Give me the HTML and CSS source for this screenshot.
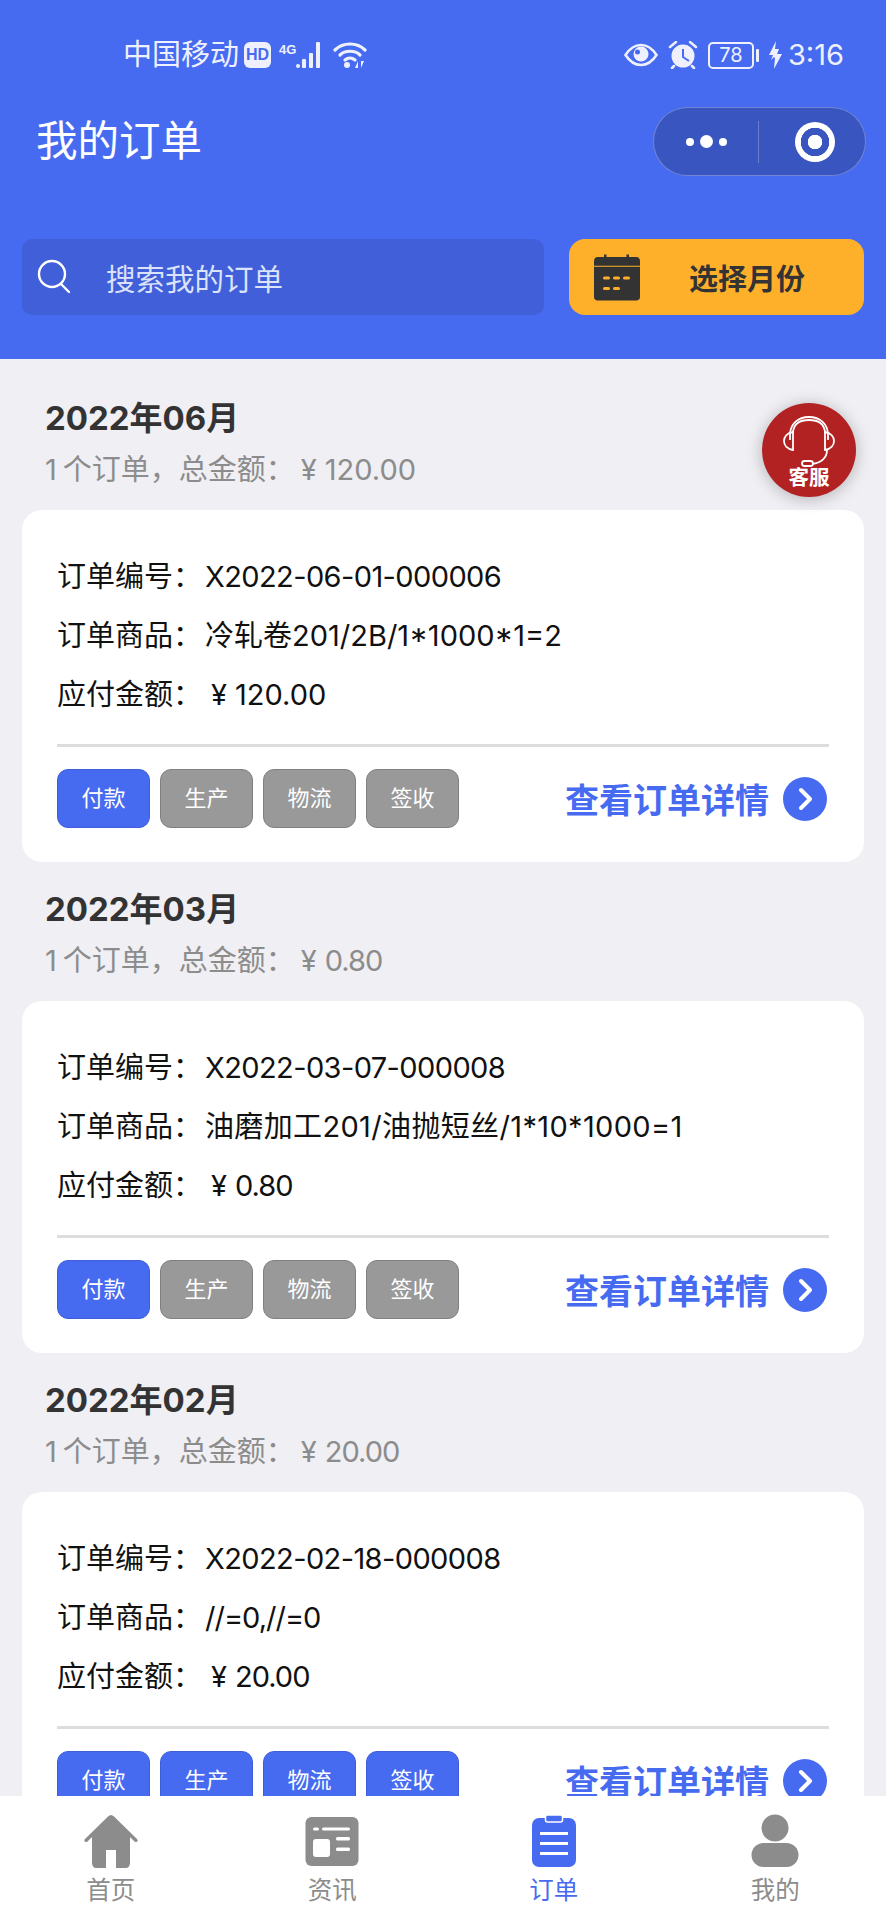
FILE: index.html
```html
<!DOCTYPE html>
<html lang="zh-CN">
<head>
<meta charset="utf-8">
<title>我的订单</title>
<link rel="stylesheet" href="styles.css">
</head>
<body>
<div class="app">
  <header class="header">
    <div class="status">
      <div class="status-left">
        <span class="carrier">中国移动</span>
        <span class="hd">HD</span>
        <span class="net">4G</span>
        <svg class="signal" width="28" height="28" viewBox="0 0 28 28"><g fill="#eef1fd"><rect x="0" y="23" width="4" height="4" rx="2"/><rect x="6" y="18" width="4" height="9" rx="1"/><rect x="13" y="12" width="4" height="15" rx="1"/><rect x="20" y="1" width="4" height="26" rx="1"/></g></svg>
        <svg class="wifi" width="34" height="28" viewBox="0 0 34 28"><g fill="none" stroke="#eef1fd" stroke-width="3.2" stroke-linecap="round"><path d="M2 9C10 1 24 1 32 9"/><path d="M7 14C12 9 22 9 27 14"/><path d="M12 19C15 16.500 19 16.500 22 19"/></g><circle cx="14" cy="24" r="3" fill="#eef1fd"/><path d="M25 27v-7l-3 7zM28 20v7l3-7z" fill="#eef1fd"/></svg>
      </div>
      <div class="status-right">
        <svg class="eye" width="34" height="24" viewBox="0 0 34 24"><path d="M1.500 12C6 5 11 2 17 2s11 3 15.500 10C28 19 23 22 17 22S6 19 1.500 12z" fill="none" stroke="#eef1fd" stroke-width="2.600"/><circle cx="17" cy="11" r="7.500" fill="#eef1fd"/><circle cx="13.500" cy="9" r="2.500" fill="#476bf0"/></svg>
        <svg class="alarm" width="30" height="28" viewBox="0 0 30 28"><circle cx="15" cy="15" r="11.500" fill="#eef1fd"/><path d="M15 8v8l6 4" fill="none" stroke="#476bf0" stroke-width="2"/><path d="M2 6l6-5M28 6l-6-5M6 25l-2 2M24 25l2 2" stroke="#eef1fd" stroke-width="2.500" stroke-linecap="round"/></svg>
        <span class="battery"><span class="battery-level">78</span></span>
        <span class="battery-nub"></span>
        <svg class="bolt" width="15" height="28" viewBox="0 0 15 28"><path d="M8 0L1 14h4L3 19l3-3 1 1-1 11 8-15H9l2-5H7z" fill="#eef1fd"/></svg>
        <span class="clock">3:16</span>
      </div>
    </div>
    <div class="titlebar">
      <h1 class="title">我的订单</h1>
      <div class="capsule">
        <div class="capsule-dots"><i class="dot"></i><i class="dot dot-big"></i><i class="dot"></i></div>
        <div class="capsule-ring"><i class="ring"></i></div>
      </div>
    </div>
    <div class="toolbar">
      <div class="search">
        <svg width="36" height="36" viewBox="0 0 36 36"><circle cx="16" cy="15" r="13" fill="none" stroke="#fff" stroke-width="2.400"/><path d="M25 25l8 8" stroke="#fff" stroke-width="2.400" stroke-linecap="round"/></svg>
        <span class="search-text">搜索我的订单</span>
      </div>
      <div class="month-btn">
        <svg width="48" height="48" viewBox="0 0 48 48"><path d="M11 1.500h2.500V4h20V1.500H36V4h7c3 0 4 2 4 4v4.800H1V8c0-2 1-4 4-4h6z" fill="#333"/><path d="M1 13.800h46V44c0 2-1.500 3.500-3.500 3.500h-39C2.500 47.500 1 46 1 44z" fill="#333"/><g fill="#ffb02b"><rect x="10" y="23.500" width="7" height="3" rx="1.500"/><rect x="20" y="23.500" width="7" height="3" rx="1.500"/><rect x="30" y="23.500" width="7" height="3" rx="1.500"/><rect x="10" y="34" width="7" height="3" rx="1.500"/><rect x="20" y="34" width="7" height="3" rx="1.500"/></g></svg>
        <span class="month-text">选择月份</span>
      </div>
    </div>
  </header>

  <main class="list">
    <section class="group">
      <h2 class="month">2022年06月</h2>
      <p class="summary"><span class="count">1</span>个订单，总金额：<span class="yen">¥</span>120.00</p>
      <article class="card">
        <p class="row"><span class="key">订单编号：</span><span class="tight">X2022-06-01-000006</span></p>
        <p class="row"><span class="key">订单商品：</span>冷轧卷201/2B/1*1000*1=2</p>
        <p class="row"><span class="key">应付金额：</span><span class="yen">¥</span>120.00</p>
        <div class="foot">
          <div class="tags"><span class="tag on">付款</span><span class="tag">生产</span><span class="tag">物流</span><span class="tag">签收</span></div>
          <div class="detail"><span>查看订单详情</span><svg class="go" width="44" height="44" viewBox="0 0 44 44"><circle cx="22" cy="22" r="22" fill="#476bf0"/><path d="M18 13l9 9-9 9" fill="none" stroke="#fff" stroke-width="4" stroke-linecap="round" stroke-linejoin="round"/></svg></div>
        </div>
      </article>
    </section>
    <section class="group">
      <h2 class="month">2022年03月</h2>
      <p class="summary"><span class="count">1</span>个订单，总金额：<span class="yen">¥</span><span class="tighter">0.80</span></p>
      <article class="card">
        <p class="row"><span class="key">订单编号：</span><span class="tight">X2022-03-07-000008</span></p>
        <p class="row"><span class="key">订单商品：</span><span class="loose">油磨加工201/油抛短丝/1*10*1000=1</span></p>
        <p class="row"><span class="key">应付金额：</span><span class="yen">¥</span><span class="tighter">0.80</span></p>
        <div class="foot">
          <div class="tags"><span class="tag on">付款</span><span class="tag">生产</span><span class="tag">物流</span><span class="tag">签收</span></div>
          <div class="detail"><span>查看订单详情</span><svg class="go" width="44" height="44" viewBox="0 0 44 44"><circle cx="22" cy="22" r="22" fill="#476bf0"/><path d="M18 13l9 9-9 9" fill="none" stroke="#fff" stroke-width="4" stroke-linecap="round" stroke-linejoin="round"/></svg></div>
        </div>
      </article>
    </section>
    <section class="group">
      <h2 class="month">2022年02月</h2>
      <p class="summary"><span class="count">1</span>个订单，总金额：<span class="yen">¥</span><span class="tighter">20.00</span></p>
      <article class="card">
        <p class="row"><span class="key">订单编号：</span><span class="tight">X2022-02-18-000008</span></p>
        <p class="row"><span class="key">订单商品：</span><span class="tighter">//=0,//=0</span></p>
        <p class="row"><span class="key">应付金额：</span><span class="yen">¥</span><span class="tighter">20.00</span></p>
        <div class="foot">
          <div class="tags"><span class="tag on">付款</span><span class="tag on">生产</span><span class="tag on">物流</span><span class="tag on">签收</span></div>
          <div class="detail"><span>查看订单详情</span><svg class="go" width="44" height="44" viewBox="0 0 44 44"><circle cx="22" cy="22" r="22" fill="#476bf0"/><path d="M18 13l9 9-9 9" fill="none" stroke="#fff" stroke-width="4" stroke-linecap="round" stroke-linejoin="round"/></svg></div>
        </div>
      </article>
    </section>
    <div class="service">
      <svg width="54" height="52" viewBox="0 0 54 52"><g fill="none" stroke="#fff" stroke-width="1.800"><path d="M8 24V19C8 8 16 1 27 1s19 7 19 18v5"/><path d="M11 17v-1C12 7 19 4 27 4s15 3 16 12v1"/><path d="M11 16C5 17 2 21 2 25s3 8 9 9z"/><path d="M43 16c6 1 9 5 9 9s-3 8-9 9z"/><path d="M45 34c0 8-6 13-15 14"/><rect x="20" y="45" width="11" height="5" rx="2.500"/></g></svg>
      <span class="service-text">客服</span>
    </div>
  </main>

  <nav class="tabbar">
    <div class="tab">
      <svg width="56" height="54" viewBox="0 0 56 54"><path d="M28 1c1 0 2 .5 3 1.500L54 25c1 1 1 3-1 3-1 0-1 0-2-1l-4-4v26c0 3-2 5-4 5H33V36H23v18H13c-2 0-4-2-4-5V23l-4 4c-1 1-1 1-2 1-2 0-2-2-1-3L25 2.500C26 1.500 27 1 28 1z" fill="#8c8c8c"/></svg>
      <span class="tab-label">首页</span>
    </div>
    <div class="tab">
      <svg width="56" height="54" viewBox="0 0 56 54"><rect x="1.500" y="3" width="53" height="49" rx="6" fill="#8c8c8c"/><g fill="#fff"><rect x="9" y="13.500" width="6" height="3" rx="1.500"/><rect x="18" y="13.500" width="28" height="3" rx="1.500"/><rect x="9" y="25" width="17" height="18" rx="3"/><rect x="32" y="23" width="14" height="3.500" rx="1.500"/><rect x="32" y="33.500" width="14" height="3.500" rx="1.500"/></g></svg>
      <span class="tab-label">资讯</span>
    </div>
    <div class="tab tab-on">
      <svg width="56" height="54" viewBox="0 0 56 54"><rect x="6" y="4" width="44" height="49" rx="7" fill="#476bf0"/><rect x="19.500" y="1" width="17" height="7" rx="2" fill="#476bf0" stroke="#fff" stroke-width="1.500"/><g fill="#fff"><rect x="14" y="18" width="28" height="3"/><rect x="14" y="28" width="28" height="3"/><rect x="14" y="38" width="28" height="3"/></g></svg>
      <span class="tab-label">订单</span>
    </div>
    <div class="tab">
      <svg width="56" height="54" viewBox="0 0 56 54"><circle cx="28" cy="14" r="13.500" fill="#8c8c8c"/><rect x="4.500" y="29" width="47" height="24" rx="12" fill="#8c8c8c"/></svg>
      <span class="tab-label">我的</span>
    </div>
  </nav>
</div>
</body>
</html>
```
FILE: styles.css
```css
* { box-sizing: border-box; margin: 0; padding: 0; }
html, body { width: 886px; height: 1920px; overflow: hidden; }
body { font-family: Inter, "Noto Sans CJK SC", sans-serif; color: #111; background: #efeff4; }
.app { display: flex; flex-direction: column; width: 886px; height: 1920px; }

.header { height: 359px; flex: none; background: #476bf0; color: #fff; padding-top: 38px; }
.status { display: flex; justify-content: space-between; align-items: center; height: 34px; padding: 0 42px 0 123px; color: #eef1fd; }
.status-left, .status-right { display: flex; align-items: center; }
.carrier { font-size: 29px; line-height: 34px; }
.hd { width: 27px; height: 26px; margin-left: 5px; border-radius: 6px; background: #eef1fd; color: #476bf0; font: 700 16px/26px "Liberation Sans", sans-serif; text-align: center; }
.net { width: 20px; height: 28px; margin-left: 8px; font: 700 13px/18px "Liberation Sans", sans-serif; }
.signal { margin-left: -3px; }
.wifi { margin-left: 9px; }
.alarm { margin-left: 10px; }
.battery { width: 46px; height: 27px; margin-left: 10px; border: 2px solid #eef1fd; border-radius: 5px; display: flex; align-items: center; justify-content: center; }
.battery-level { font-size: 20px; line-height: 23px; }
.battery-nub { width: 3px; height: 13px; margin-left: 2px; border-radius: 1px; background: #eef1fd; }
.bolt { margin-left: 9px; }
.clock { margin-left: 5px; font-size: 29px; line-height: 34px; }

.titlebar { display: flex; justify-content: space-between; align-items: center; height: 69px; margin-top: 35px; padding: 0 20px 0 36px; }
.title { font-size: 41.500px; line-height: 69px; font-weight: 400; }
.capsule { display: flex; align-items: center; width: 213px; height: 69px; border: 1px solid rgba(255,255,255,.28); border-radius: 35px; background: #3955c0; }
.capsule-dots { display: flex; align-items: center; justify-content: center; gap: 6px; width: 105px; height: 42px; border-right: 1px solid rgba(255,255,255,.25); }
.dot { width: 8px; height: 8px; border-radius: 50%; background: #fff; }
.dot-big { width: 13px; height: 13px; }
.capsule-ring { flex: 1; display: flex; justify-content: center; padding-left: 6px; }
.ring { width: 40px; height: 40px; border-radius: 50%; background: radial-gradient(circle, #fff 0 7px, #3955c0 7.500px 14px, #fff 14.500px); }

.toolbar { display: flex; justify-content: space-between; margin-top: 63px; padding: 0 22px; }
.search { display: flex; align-items: center; width: 522px; height: 76px; padding-left: 14px; border-radius: 10px; background: #405fd8; }
.search-text { margin-left: 34px; font-size: 29.500px; color: #dbe2fb; }
.month-btn { display: flex; align-items: center; width: 295px; height: 76px; padding-left: 24px; border-radius: 16px; background: #ffb02b; }
.month-text { margin-left: 48px; font-size: 29px; font-weight: 700; color: #333; }

.list { position: relative; flex: 1; min-height: 0; overflow: hidden; padding: 12px 22px 0; }
.group { padding-top: 24px; }
.month { padding-left: 23px; font-size: 33px; line-height: 46px; font-weight: 700; color: #333; }
.summary { margin-top: 6px; padding-left: 23px; font-size: 29px; line-height: 46px; color: #8c8c8c; }
.count { margin-right: 6px; }
.yen { margin: 0 8px 0 6px; }
.card { margin-top: 17px; height: 352px; padding: 37px 35px 0; border-radius: 20px; background: #fff; }
.row { font-size: 29px; line-height: 59px; color: #111; white-space: nowrap; }
.key { margin-right: 3px; }
.tight { letter-spacing: -.6px; }
.tighter { letter-spacing: -1px; }
.loose { letter-spacing: .35px; }
.foot { display: flex; justify-content: space-between; align-items: center; margin-top: 20px; padding-top: 22px; border-top: 3px solid #ddd; }
.tags { display: flex; gap: 10px; }
.tag { width: 93px; height: 59px; border: 1px solid #808080; border-radius: 11px; background: #999; color: #fff; font-size: 22px; line-height: 57px; text-align: center; }
.tag.on { border-color: #3d5ed8; background: #476bf0; }
.detail { display: flex; align-items: center; gap: 14px; padding-right: 2px; font-size: 34px; font-weight: 700; color: #476bf0; }
.go { flex: none; }

.service { position: absolute; top: 44px; left: 762px; width: 94px; height: 94px; padding-top: 13px; border-radius: 50%; background: #b22222; box-shadow: 0 2px 16px rgba(0,0,0,.25); display: flex; flex-direction: column; align-items: center; color: #fff; }
.service-text { margin-top: -3px; font-size: 20.500px; line-height: 26px; font-weight: 700; }

.tabbar { flex: none; display: grid; grid-template-columns: repeat(4, 1fr); height: 124px; padding-top: 18px; background: #fff; position: relative; }
.tab { display: flex; flex-direction: column; align-items: center; color: #8c8c8c; }
.tab-on { color: #476bf0; }
.tab-label { margin-top: 4px; font-size: 24.500px; line-height: 36px; }
```
